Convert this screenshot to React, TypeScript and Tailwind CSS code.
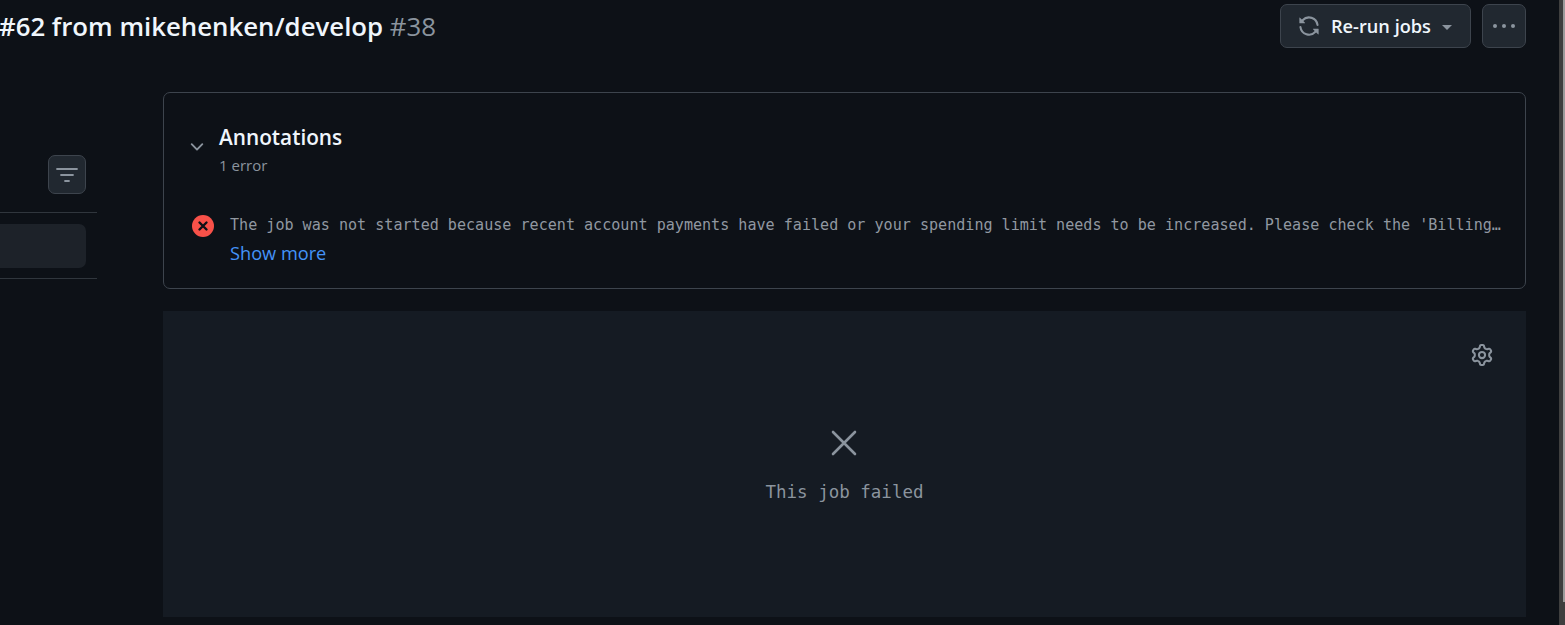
import React from 'react';

const SYNC =
  'M1.705 8.005a.75.75 0 0 1 .834.656 5.5 5.5 0 0 0 9.592 2.97l-1.204-1.204a.25.25 0 0 1 .177-.427h3.646a.25.25 0 0 1 .25.25v3.646a.25.25 0 0 1-.427.177l-1.38-1.38A7.002 7.002 0 0 1 1.05 8.84a.75.75 0 0 1 .656-.834ZM8 2.5a5.487 5.487 0 0 0-4.131 1.869l1.204 1.204A.25.25 0 0 1 4.896 6H1.25A.25.25 0 0 1 1 5.75V2.104a.25.25 0 0 1 .427-.177l1.38 1.38A7.002 7.002 0 0 1 14.95 7.16a.75.75 0 0 1-1.49.178A5.5 5.5 0 0 0 8 2.5Z';

const GEAR =
  'M8 0a8.2 8.2 0 0 1 .701.031C9.444.095 9.99.645 10.16 1.29l.288 1.107c.018.066.079.158.212.224.231.114.454.243.668.386.123.082.233.09.299.071l1.103-.303c.644-.176 1.392.021 1.82.63.27.385.506.792.704 1.218.315.675.111 1.422-.364 1.891l-.814.806c-.049.048-.098.147-.088.294.016.257.016.515 0 .772-.01.147.038.246.088.294l.814.806c.475.469.679 1.216.364 1.891a7.977 7.977 0 0 1-.704 1.217c-.428.61-1.176.807-1.82.63l-1.102-.302c-.067-.019-.177-.011-.3.071a5.909 5.909 0 0 1-.668.386c-.133.066-.194.158-.211.224l-.29 1.106c-.168.646-.715 1.196-1.458 1.26a8.006 8.006 0 0 1-1.402 0c-.743-.064-1.289-.614-1.458-1.26l-.289-1.106c-.018-.066-.079-.158-.212-.224a5.738 5.738 0 0 1-.668-.386c-.123-.082-.233-.09-.299-.071l-1.103.303c-.644.176-1.392-.021-1.82-.63a8.12 8.12 0 0 1-.704-1.218c-.315-.675-.111-1.422.363-1.891l.815-.806c.05-.048.098-.147.088-.294a6.214 6.214 0 0 1 0-.772c.01-.147-.038-.246-.088-.294l-.815-.806C.635 6.045.431 5.298.746 4.623a7.92 7.92 0 0 1 .704-1.217c.428-.61 1.176-.807 1.82-.63l1.102.302c.067.019.177.011.3-.071.214-.143.437-.272.668-.386.133-.066.194-.158.211-.224l.29-1.106C6.009.645 6.556.095 7.299.03 7.53.01 7.764 0 8 0Zm-.571 1.525c-.036.003-.108.036-.137.146l-.289 1.105c-.147.561-.549.967-.998 1.189-.173.086-.34.183-.5.29-.417.278-.97.423-1.529.27l-1.103-.303c-.109-.03-.175.016-.195.045-.22.312-.412.644-.573.99-.014.031-.021.11.059.19l.815.806c.411.406.562.957.53 1.456a4.709 4.709 0 0 0 0 .582c.032.499-.119 1.05-.53 1.456l-.815.806c-.081.08-.073.159-.059.19.162.346.353.677.573.989.02.03.085.076.195.046l1.102-.303c.56-.153 1.113-.008 1.53.27.161.107.328.204.501.29.447.222.85.629.997 1.189l.289 1.105c.029.109.101.143.137.146a6.6 6.6 0 0 0 1.142 0c.036-.003.108-.036.137-.146l.289-1.105c.147-.561.549-.967.998-1.189.173-.086.34-.183.5-.29.417-.278.97-.423 1.529-.27l1.103.303c.109.029.175-.016.195-.045.22-.313.411-.644.573-.99.014-.031.021-.11-.059-.19l-.815-.806c-.411-.406-.562-.957-.53-1.456a4.709 4.709 0 0 0 0-.582c-.032-.499.119-1.05.53-1.456l.815-.806c.081-.08.073-.159.059-.19a6.464 6.464 0 0 0-.573-.989c-.02-.03-.085-.076-.195-.046l-1.102.303c-.56.153-1.113.008-1.53-.27a4.44 4.44 0 0 0-.501-.29c-.447-.222-.85-.629-.997-1.189l-.289-1.105c-.029-.11-.101-.143-.137-.146a6.6 6.6 0 0 0-1.142 0ZM11 8a3 3 0 1 1-6 0 3 3 0 0 1 6 0ZM9.5 8a1.5 1.5 0 1 0-3.001.001A1.5 1.5 0 0 0 9.5 8Z';

export default function App() {
  return (
    <div className="flex h-[625px] w-[1565px] overflow-hidden bg-[#0d1117] font-['Open_Sans',sans-serif]">
      <div className="flex min-w-0 flex-1 flex-col">
        {/* Header */}
        <div className="mb-[44px] box-content flex h-[44px] shrink-0 items-start justify-between pr-[33px] pt-[4px]">
          <h1 className="-ml-[1px] mt-[2px] whitespace-nowrap text-[25.8px] leading-[40px] font-semibold text-[#f0f6fc]">
            #62 from mikehenken/develop <span className="font-normal text-[#8b949e]">#38</span>
          </h1>
          <div className="flex gap-[11px]">
            <button className="flex h-[44px] w-[191px] items-center rounded-[7px] border border-[#3d444d] bg-[#212830] pl-[17px] text-[#f0f6fc]">
              <svg viewBox="0 0 16 16" className="h-[22px] w-[22px] fill-[#8b949e]">
                <path d={SYNC} />
              </svg>
              <span className="ml-[11px] mt-[1px] text-[18.2px] font-semibold">Re-run jobs</span>
              <span className="ml-[11px] mt-[2px] h-0 w-0 border-x-[5px] border-t-[5px] border-x-transparent border-t-[#8b949e]" />
            </button>
            <button className="flex h-[44px] w-[44px] items-center justify-center gap-[5px] rounded-[7px] border border-[#3d444d] bg-[#212830]">
              <span className="h-[4px] w-[4px] rounded-full bg-[#8b949e]" />
              <span className="h-[4px] w-[4px] rounded-full bg-[#8b949e]" />
              <span className="h-[4px] w-[4px] rounded-full bg-[#8b949e]" />
            </button>
          </div>
        </div>

        <div className="flex min-h-0 flex-1 pr-[33px]">
          {/* Sidebar */}
          <aside className="mr-[66px] w-[97px] shrink-0 pt-[63px]">
            <div className="flex justify-end pr-[11px]">
              <button className="flex h-[39px] w-[38px] items-center justify-center rounded-[7px] border border-[#3d444d] bg-[#212830]">
                <svg viewBox="0 0 22 16" className="h-[16px] w-[22px]" stroke="#8b949e" strokeWidth="1.8" strokeLinecap="round">
                  <path d="M1 2h20M5 8h12M9 14h4" />
                </svg>
              </button>
            </div>
            <div className="mt-[18px] border-y border-[#30363d] pb-[10px] pr-[11px] pt-[11px]">
              <div className="h-[44px] rounded-r-[7px] bg-[#1d2229]" />
            </div>
          </aside>

          {/* Content */}
          <main className="flex min-w-0 flex-1 flex-col">
            <section className="h-[197px] shrink-0 rounded-[7px] border border-[#3d444d] pl-[28px] pr-[24px] pt-[29px]">
              <div className="flex">
                <svg viewBox="0 0 16 16" className="-ml-[5px] mt-[15px] h-[20px] w-[20px] fill-[#8b949e]">
                  <path d="M12.78 5.22a.749.749 0 0 1 0 1.06l-4.25 4.25a.749.749 0 0 1-1.06 0L3.22 6.28a.749.749 0 1 1 1.06-1.06L8 8.939l3.72-3.719a.749.749 0 0 1 1.06 0Z" />
                </svg>
                <div className="ml-[12px]">
                  <div className="text-[20.8px] leading-[30px] font-semibold text-[#f0f6fc]">Annotations</div>
                  <div className="mt-[3px] text-[15px] leading-[20px] text-[#8b949e]">1 error</div>
                </div>
              </div>
              <div className="mt-[39px] flex">
                <svg viewBox="0 0 22 22" className="mt-[1px] h-[22px] w-[22px] shrink-0">
                  <circle cx="11" cy="11" r="11" fill="#f85149" />
                  <path d="M7.5 7.5l7 7M14.5 7.5l-7 7" stroke="#0d1117" strokeWidth="2.4" strokeLinecap="round" />
                </svg>
                <div className="ml-[16px] min-w-0 flex-1">
                  <div className="whitespace-nowrap font-['DejaVu_Sans_Mono',monospace] text-[15.08px] leading-[22px] text-[#9198a1]">
                    The job was not started because recent account payments have failed or your spending limit needs to be increased. Please check the 'Billing…
                  </div>
                  <a className="mt-[5px] block text-[18.2px] leading-[24px] text-[#4493f8]">Show more</a>
                </div>
              </div>
            </section>

            <section className="relative mt-[22px] flex h-[306px] shrink-0 flex-col items-center bg-[#151b23] pt-[118px]">
              <svg viewBox="0 0 16 16" className="absolute right-[33px] top-[33px] h-[22px] w-[22px] fill-[#8b949e]">
                <path d={GEAR} />
              </svg>
              <svg viewBox="0 0 28 28" className="-ml-[2px] h-[28px] w-[28px]" stroke="#8b949e" strokeWidth="2.6" strokeLinecap="round">
                <path d="M3 3l22 22M25 3L3 25" />
              </svg>
              <p className="mt-[23px] font-['DejaVu_Sans_Mono',monospace] text-[17.5px] leading-[24px] text-[#8b949e]">This job failed</p>
            </section>
          </main>
        </div>
      </div>
      {/* Scrollbar sliver at the window edge */}
      <div className="flex w-[6px] shrink-0 justify-end bg-[#3f3f3f]">
        <div className="h-[602px] w-[2px] bg-[#9b9b9b]" />
      </div>
    </div>
  );
}
